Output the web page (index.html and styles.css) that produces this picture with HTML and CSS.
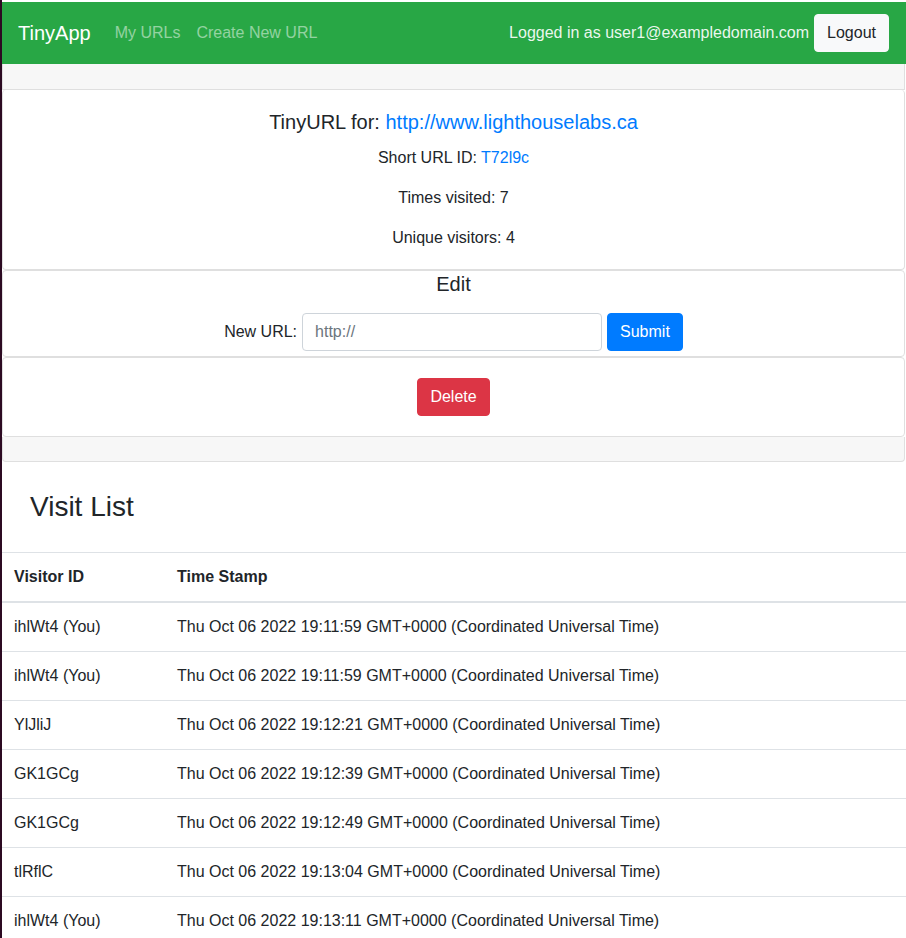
FILE: index.html
```html
<!DOCTYPE html>
<html lang="en">
<head>
<meta charset="utf-8">
<title>TinyApp</title>
<link rel="stylesheet" href="styles.css">
</head>
<body>
<nav class="navbar">
  <a class="brand" href="#">TinyApp</a>
  <a class="nav-link" href="#">My URLs</a>
  <a class="nav-link" href="#">Create New URL</a>
  <div class="nav-right">
    <span class="nav-text">Logged in as user1@exampledomain.com</span>
    <button class="btn btn-light">Logout</button>
  </div>
</nav>

<div class="card">
  <div class="card-header"></div>
  <div class="inner card-info">
    <h5 class="card-title">TinyURL for: <a href="#">http://www.lighthouselabs.ca</a></h5>
    <p class="card-text">Short URL ID: <a href="#">T72l9c</a></p>
    <p class="card-text">Times visited: 7</p>
    <p class="card-text last">Unique visitors: 4</p>
  </div>
  <div class="inner card-edit">
    <h5 class="edit-title">Edit</h5>
    <form class="edit-form">
      <label for="u">New URL:</label>
      <input id="u" class="form-control" type="text" placeholder="http://">
      <button class="btn btn-primary" type="button">Submit</button>
    </form>
  </div>
  <div class="inner card-delete">
    <button class="btn btn-danger" type="button">Delete</button>
  </div>
  <div class="card-footer"></div>
</div>

<h3 class="visit-title">Visit List</h3>

<table class="table">
  <thead>
    <tr><th class="col-id">Visitor ID</th><th>Time Stamp</th></tr>
  </thead>
  <tbody>
    <tr><td>ihlWt4 (You)</td><td>Thu Oct 06 2022 19:11:59 GMT+0000 (Coordinated Universal Time)</td></tr>
    <tr><td>ihlWt4 (You)</td><td>Thu Oct 06 2022 19:11:59 GMT+0000 (Coordinated Universal Time)</td></tr>
    <tr><td>YlJliJ</td><td>Thu Oct 06 2022 19:12:21 GMT+0000 (Coordinated Universal Time)</td></tr>
    <tr><td>GK1GCg</td><td>Thu Oct 06 2022 19:12:39 GMT+0000 (Coordinated Universal Time)</td></tr>
    <tr><td>GK1GCg</td><td>Thu Oct 06 2022 19:12:49 GMT+0000 (Coordinated Universal Time)</td></tr>
    <tr><td>tlRflC</td><td>Thu Oct 06 2022 19:13:04 GMT+0000 (Coordinated Universal Time)</td></tr>
    <tr><td>ihlWt4 (You)</td><td>Thu Oct 06 2022 19:13:11 GMT+0000 (Coordinated Universal Time)</td></tr>
  </tbody>
</table>
</body>
</html>
```

FILE: styles.css
```css
html {
  background: #2c0a22;
}
body {
  margin: 0 0 0 2px;
  padding-top: 2px;
  min-height: 100vh;
  background: #fff;
  font-family: "Liberation Sans", Arial, sans-serif;
  font-size: 16px;
  line-height: 1.5;
  color: #212529;
}
a {
  color: #007bff;
  text-decoration: none;
}

/* navbar */
.navbar {
  height: 62px;
  box-sizing: border-box;
  background: #28a745;
  display: flex;
  align-items: center;
  padding: 0 17px 0 16px;
}
.brand {
  color: #fff;
  font-size: 20px;
  line-height: 30px;
  margin-right: 16px;
}
.nav-link {
  color: rgba(255, 255, 255, 0.5);
  padding: 0 8px;
}
.nav-right {
  margin-left: auto;
  display: flex;
  align-items: center;
  gap: 5px;
}
.nav-text {
  color: rgba(255, 255, 255, 0.92);
}

/* buttons */
.btn {
  font-family: inherit;
  font-size: 16px;
  line-height: 24px;
  padding: 6px 12px;
  border: 1px solid transparent;
  border-radius: 4px;
  cursor: pointer;
}
.btn-light {
  background: #f8f9fa;
  border-color: #f8f9fa;
  color: #212529;
}
.btn-primary {
  background: #007bff;
  border-color: #007bff;
  color: #fff;
}
.btn-danger {
  background: #dc3545;
  border-color: #dc3545;
  color: #fff;
}

/* card */
.card {
  margin-right: 1px;
  text-align: center;
}
.card-header {
  height: 25px;
  background: #f7f7f7;
  border: 1px solid #dfdfdf;
  border-top: 0;
}
.card-footer {
  height: 24px;
  background: #f7f7f7;
  border: 1px solid #dfdfdf;
  border-top: 0;
  border-radius: 0 0 4px 4px;
}
.inner {
  border: 1px solid #dfdfdf;
  border-radius: 4px;
}
.card-info {
  border-top: 0;
  padding: 20px 20px 19px;
}
.card-title {
  margin: 0 0 12px;
  font-size: 20px;
  font-weight: 400;
  line-height: 24px;
}
.card-text {
  margin: 0 0 16px;
}
.card-text.last {
  margin-bottom: 0;
}
.card-edit {
  padding: 1px 20px 5px;
}
.edit-title {
  margin: 0;
  font-size: 20px;
  font-weight: 400;
  line-height: 24px;
}
.edit-form {
  margin-top: 17px;
  display: flex;
  justify-content: center;
  align-items: center;
  gap: 5px;
}
.form-control {
  width: 300px;
  height: 38px;
  box-sizing: border-box;
  padding: 6px 12px;
  font-family: inherit;
  font-size: 16px;
  color: #495057;
  border: 1px solid #ced4da;
  border-radius: 4px;
}
.form-control::placeholder {
  color: #6c757d;
}
.card-delete {
  padding: 20px;
}

/* visit list */
.visit-title {
  margin: 0;
  padding: 28px 28px 28px;
  font-size: 28px;
  font-weight: 400;
  line-height: 1.2;
}
.table {
  width: 100%;
  border-collapse: collapse;
}
.table th,
.table td {
  text-align: left;
  padding: 12px;
  border-top: 1px solid #dee2e6;
  vertical-align: top;
}
.table thead th {
  border-bottom: 2px solid #dee2e6;
  font-weight: 700;
}
.col-id {
  width: 139px;
}
```
